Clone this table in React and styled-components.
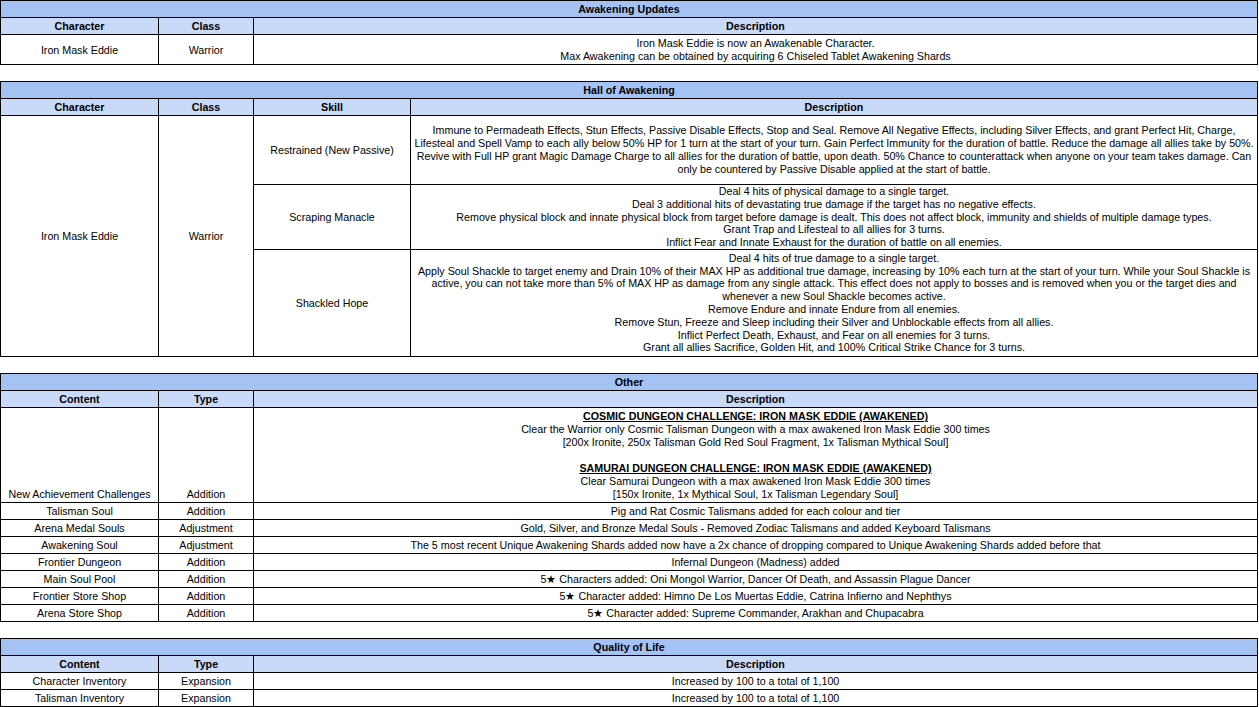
import React from 'react'
import styled, { createGlobalStyle } from 'styled-components'

const GlobalStyle = createGlobalStyle`
    body {
        margin: 0;
        background: #fff;
        font-family: "Liberation Sans", Arial, sans-serif;
        font-size: 10.7px;
        color: #000;
    }
`

const Page = styled.div`
    display: flex;
    flex-direction: column;
    gap: 16px;
    width: 1258px;
`

const Table = styled.table`
    width: 1258px;
    table-layout: fixed;
    border-collapse: collapse;
`

const Col = styled.col`
    width: ${p => p.$w ? p.$w + 'px' : 'auto'};
`

const Title = styled.th`
    background: #a4c2f4;
    border: 1px solid #000;
    font-weight: bold;
    text-align: center;
    line-height: 13px;
    padding: 2px 3px 1px;
`

const Head = styled.th`
    background: #c9daf8;
    border: 1px solid #000;
    font-weight: bold;
    text-align: center;
    line-height: 13px;
    padding: 2px 3px 1px;
`

const Row = styled.tr`
    height: ${p => p.$h ? p.$h + 'px' : 'auto'};
`

const Cell = styled.td`
    border: 1px solid #000;
    text-align: center;
    vertical-align: ${p => p.$align || 'middle'};
    line-height: ${p => p.$tight ? '12.8px' : '13px'};
    padding: ${p => p.$tight ? '0 2px' : '2px 2px 1px'};
    white-space: ${p => p.$nowrap ? 'pre' : 'pre-line'};
    overflow-wrap: break-word;
`

const Heading = styled.span`
    font-weight: bold;
    text-decoration: underline;
`

const Section = ({ title, cols, heads, children }) => (
    <Table>
        <colgroup>
            {cols.map((w, i) => <Col key={i} $w={w} />)}
        </colgroup>
        <thead>
            <tr><Title colSpan={cols.length}>{title}</Title></tr>
            <tr>{heads.map(h => <Head key={h}>{h}</Head>)}</tr>
        </thead>
        <tbody>{children}</tbody>
    </Table>
)

const skills = [
    {
        name: 'Restrained (New Passive)',
        h: 69,
        text: 'Immune to Permadeath Effects, Stun Effects, Passive Disable Effects, Stop and Seal. Remove All Negative Effects, including Silver Effects, and grant Perfect Hit, Charge,\nLifesteal and Spell Vamp to each ally below 50% HP for 1 turn at the start of your turn. Gain Perfect Immunity for the duration of battle. Reduce the damage all allies take by 50%.\nRevive with Full HP grant Magic Damage Charge to all allies for the duration of battle, upon death. 50% Chance to counterattack when anyone on your team takes damage. Can\nonly be countered by Passive Disable applied at the start of battle.',
    },
    {
        name: 'Scraping Manacle',
        h: 64,
        text: 'Deal 4 hits of physical damage to a single target.\nDeal 3 additional hits of devastating true damage if the target has no negative effects.\nRemove physical block and innate physical block from target before damage is dealt. This does not affect block, immunity and shields of multiple damage types.\nGrant Trap and Lifesteal to all allies for 3 turns.\nInflict Fear and Innate Exhaust for the duration of battle on all enemies.',
    },
    {
        name: 'Shackled Hope',
        h: 107,
        text: 'Deal 4 hits of true damage to a single target.\nApply Soul Shackle to target enemy and Drain 10% of their MAX HP as additional true damage, increasing by 10% each turn at the start of your turn. While your Soul Shackle is\nactive, you can not take more than 5% of MAX HP as damage from any single attack. This effect does not apply to bosses and is removed when you or the target dies and\nwhenever a new Soul Shackle becomes active.\nRemove Endure and innate Endure from all enemies.\nRemove Stun, Freeze and Sleep including their Silver and Unblockable effects from all allies.\nInflict Perfect Death, Exhaust, and Fear on all enemies for 3 turns.\nGrant all allies Sacrifice, Golden Hit, and 100% Critical Strike Chance for 3 turns.',
    },
]

const others = [
    ['Talisman Soul', 'Addition', 'Pig and Rat Cosmic Talismans added for each colour and tier'],
    ['Arena Medal Souls', 'Adjustment', 'Gold, Silver, and Bronze Medal Souls - Removed Zodiac Talismans and added Keyboard Talismans'],
    ['Awakening Soul', 'Adjustment', 'The 5 most recent Unique Awakening Shards added now have a 2x chance of dropping compared to Unique Awakening Shards added before that'],
    ['Frontier Dungeon', 'Addition', 'Infernal Dungeon (Madness) added'],
    ['Main Soul Pool', 'Addition', '5★ Characters added: Oni Mongol Warrior, Dancer Of Death, and Assassin Plague Dancer'],
    ['Frontier Store Shop', 'Addition', '5★ Character added: Himno De Los Muertas Eddie, Catrina Infierno and Nephthys'],
    ['Arena Store Shop', 'Addition', '5★ Character added: Supreme Commander, Arakhan and Chupacabra'],
]

const qol = [
    ['Character Inventory', 'Expansion', 'Increased by 100 to a total of 1,100'],
    ['Talisman Inventory', 'Expansion', 'Increased by 100 to a total of 1,100'],
]

const App = () => (
    <>
        <GlobalStyle />
        <Page>
            <Section title="Awakening Updates" cols={[158, 95, null]} heads={['Character', 'Class', 'Description']}>
                <Row $h={28}>
                    <Cell>Iron Mask Eddie</Cell>
                    <Cell>Warrior</Cell>
                    <Cell>{'Iron Mask Eddie is now an Awakenable Character.\nMax Awakening can be obtained by acquiring 6 Chiseled Tablet Awakening Shards'}</Cell>
                </Row>
            </Section>

            <Section title="Hall of Awakening" cols={[158, 95, 157, null]} heads={['Character', 'Class', 'Skill', 'Description']}>
                {skills.map((s, i) => (
                    <Row key={s.name} $h={s.h}>
                        {i === 0 && <Cell rowSpan={3}>Iron Mask Eddie</Cell>}
                        {i === 0 && <Cell rowSpan={3}>Warrior</Cell>}
                        <Cell $tight>{s.name}</Cell>
                        <Cell $tight $nowrap>{s.text}</Cell>
                    </Row>
                ))}
            </Section>

            <Section title="Other" cols={[158, 95, null]} heads={['Content', 'Type', 'Description']}>
                <Row $h={94}>
                    <Cell $align="bottom">New Achievement Challenges</Cell>
                    <Cell $align="bottom">Addition</Cell>
                    <Cell $align="bottom">
                        <Heading>COSMIC DUNGEON CHALLENGE: IRON MASK EDDIE (AWAKENED)</Heading>
                        {'\nClear the Warrior only Cosmic Talisman Dungeon with a max awakened Iron Mask Eddie 300 times\n[200x Ironite, 250x Talisman Gold Red Soul Fragment, 1x Talisman Mythical Soul]\n\n'}
                        <Heading>SAMURAI DUNGEON CHALLENGE: IRON MASK EDDIE (AWAKENED)</Heading>
                        {'\nClear Samurai Dungeon with a max awakened Iron Mask Eddie 300 times\n[150x Ironite, 1x Mythical Soul, 1x Talisman Legendary Soul]'}
                    </Cell>
                </Row>
                {others.map(r => (
                    <Row key={r[0]}>
                        {r.map((c, i) => <Cell key={i} $align="bottom">{c}</Cell>)}
                    </Row>
                ))}
            </Section>

            <Section title="Quality of Life" cols={[158, 95, null]} heads={['Content', 'Type', 'Description']}>
                {qol.map(r => (
                    <Row key={r[0]}>
                        {r.map((c, i) => <Cell key={i} $align="bottom">{c}</Cell>)}
                    </Row>
                ))}
            </Section>
        </Page>
    </>
)

export default App
